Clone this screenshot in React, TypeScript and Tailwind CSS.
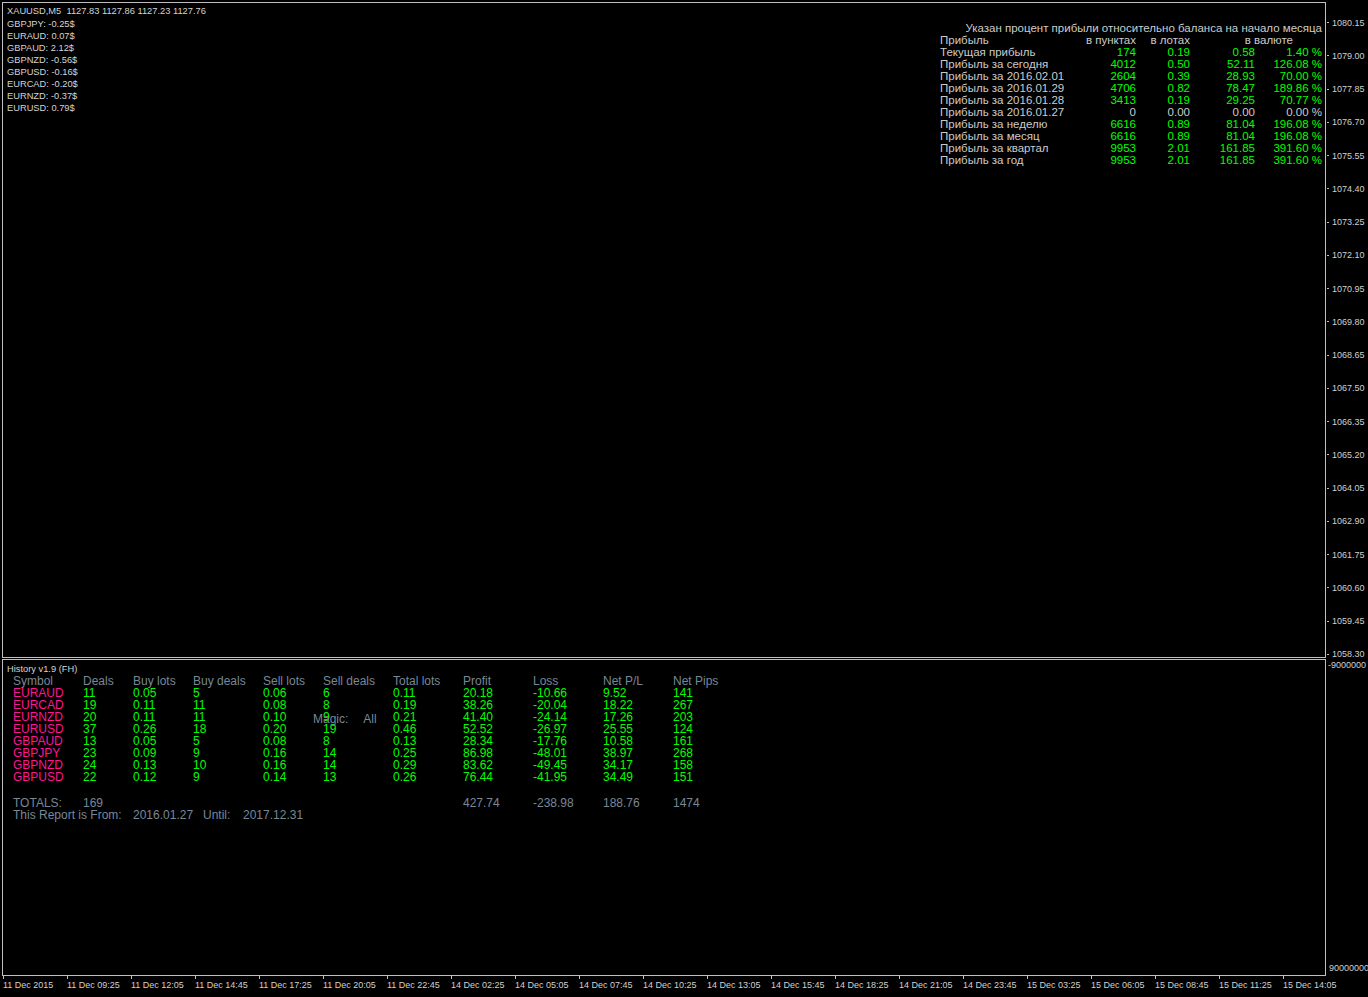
import React from "react";

const prices = [
  "1080.15","1079.00","1077.85","1076.70","1075.55","1074.40","1073.25","1072.10","1070.95","1069.80",
  "1068.65","1067.50","1066.35","1065.20","1064.05","1062.90","1061.75","1060.60","1059.45","1058.30",
];

const times = [
  "11 Dec 2015","11 Dec 09:25","11 Dec 12:05","11 Dec 14:45","11 Dec 17:25","11 Dec 20:05","11 Dec 22:45",
  "14 Dec 02:25","14 Dec 05:05","14 Dec 07:45","14 Dec 10:25","14 Dec 13:05","14 Dec 15:45","14 Dec 18:25",
  "14 Dec 21:05","14 Dec 23:45","15 Dec 03:25","15 Dec 06:05","15 Dec 08:45","15 Dec 11:25","15 Dec 14:05",
];

const pairs = [
  "GBPJPY: -0.25$","EURAUD: 0.07$","GBPAUD: 2.12$","GBPNZD: -0.56$",
  "GBPUSD: -0.16$","EURCAD: -0.20$","EURNZD: -0.37$","EURUSD: 0.79$",
];

const profitRows: [string, string, string, string, string, boolean][] = [
  ["Текущая прибыль","174","0.19","0.58","1.40 %",true],
  ["Прибыль за сегодня","4012","0.50","52.11","126.08 %",true],
  ["Прибыль за 2016.02.01","2604","0.39","28.93","70.00 %",true],
  ["Прибыль за 2016.01.29","4706","0.82","78.47","189.86 %",true],
  ["Прибыль за 2016.01.28","3413","0.19","29.25","70.77 %",true],
  ["Прибыль за 2016.01.27","0","0.00","0.00","0.00 %",false],
  ["Прибыль за неделю","6616","0.89","81.04","196.08 %",true],
  ["Прибыль за месяц","6616","0.89","81.04","196.08 %",true],
  ["Прибыль за квартал","9953","2.01","161.85","391.60 %",true],
  ["Прибыль за год","9953","2.01","161.85","391.60 %",true],
];

const headers = ["Symbol","Deals","Buy lots","Buy deals","Sell lots","Sell deals","Total lots","Profit","Loss","Net P/L","Net Pips"];

const hist = [
  ["EURAUD","11","0.05","5","0.06","6","0.11","20.18","-10.66","9.52","141"],
  ["EURCAD","19","0.11","11","0.08","8","0.19","38.26","-20.04","18.22","267"],
  ["EURNZD","20","0.11","11","0.10","9","0.21","41.40","-24.14","17.26","203"],
  ["EURUSD","37","0.26","18","0.20","19","0.46","52.52","-26.97","25.55","124"],
  ["GBPAUD","13","0.05","5","0.08","8","0.13","28.34","-17.76","10.58","161"],
  ["GBPJPY","23","0.09","9","0.16","14","0.25","86.98","-48.01","38.97","268"],
  ["GBPNZD","24","0.13","10","0.16","14","0.29","83.62","-49.45","34.17","158"],
  ["GBPUSD","22","0.12","9","0.14","13","0.26","76.44","-41.95","34.49","151"],
];

const gridCols = "grid grid-cols-[70px_50px_60px_70px_60px_70px_70px_70px_70px_70px_80px]";

export default function App() {
  return (
    <div
      className="w-[1368px] h-[997px] bg-black overflow-hidden relative text-[#d0d0d0]"
      style={{ fontFamily: '"Liberation Sans", Arial, sans-serif' }}
    >
      <div className="flex flex-row h-[976px]">
        {/* chart panels */}
        <div className="w-[1326px] pl-[2px] pt-[2px] flex flex-col shrink-0">
          {/* main chart */}
          <div className="h-[656px] border border-[#c0c0c0] flex flex-row justify-between items-start">
            <div className="pl-[4px] pt-[2px] text-[9.3px] leading-[12px] text-[#d4d4d4]">
              <div className="whitespace-pre">XAUUSD,M5  1127.83 1127.86 1127.23 1127.76</div>
              <div className="mt-[1px] flex flex-col">
                {pairs.map((p) => (
                  <div key={p} className="h-[12px]">{p}</div>
                ))}
              </div>
            </div>
            <div className="mt-[19px] mr-[3px] text-[11.5px] leading-[12px] text-[#cccccc] w-[382px]">
              <div className="text-right h-[12px] whitespace-nowrap">Указан процент прибыли относительно баланса на начало месяца</div>
              <div className="grid grid-cols-[141px_55px_54px_65px_67px] h-[12px] whitespace-nowrap">
                <div>Прибыль</div>
                <div className="text-right">в пунктах</div>
                <div className="text-right">в лотах</div>
                <div className="col-span-2 text-right pr-[29px]">в валюте</div>
              </div>
              {profitRows.map((r) => (
                <div key={r[0]} className="grid grid-cols-[141px_55px_54px_65px_67px] h-[12px] whitespace-nowrap">
                  <div>{r[0]}</div>
                  <div className={"text-right " + (r[5] ? "text-[#00ff00]" : "")}>{r[1]}</div>
                  <div className={"text-right " + (r[5] ? "text-[#00ff00]" : "")}>{r[2]}</div>
                  <div className={"text-right " + (r[5] ? "text-[#00ff00]" : "")}>{r[3]}</div>
                  <div className={"text-right " + (r[5] ? "text-[#00ff00]" : "")}>{r[4]}</div>
                </div>
              ))}
            </div>
          </div>
          {/* indicator panel */}
          <div className="mt-[1px] h-[317px] border border-[#c0c0c0] relative pt-[3px]">
            <div className="pl-[4px] h-[12px] text-[9.3px] leading-[12px] text-[#d4d4d4]">History v1.9 (FH)</div>
            <div className="pl-[10px] text-[12px] leading-[12px] whitespace-nowrap">
              <div className={gridCols + " h-[12px] text-[#778899]"}>
                {headers.map((h) => (
                  <div key={h}>{h}</div>
                ))}
              </div>
              {hist.map((r) => (
                <div key={r[0]} className={gridCols + " h-[12px] text-[#00ff00]"}>
                  {r.map((c, i) => (
                    <div key={i} className={i === 0 ? "text-[#ff1493]" : ""}>{c}</div>
                  ))}
                </div>
              ))}
              <div className={gridCols + " h-[12px] mt-[14px] text-[#778899]"}>
                <div>TOTALS:</div>
                <div>169</div>
                <div></div>
                <div></div>
                <div></div>
                <div></div>
                <div></div>
                <div>427.74</div>
                <div>-238.98</div>
                <div>188.76</div>
                <div>1474</div>
              </div>
              <div className="flex flex-row h-[12px] text-[#778899]">
                <div className="w-[120px]">This Report is From:</div>
                <div className="w-[70px]">2016.01.27</div>
                <div className="w-[40px]">Until:</div>
                <div>2017.12.31</div>
              </div>
            </div>
            <div className="absolute left-[310px] top-[53px] text-[12px] leading-[12px] text-[#778899] flex flex-row">
              <span>Magic:</span>
              <span className="ml-[15px]">All</span>
            </div>
          </div>
        </div>
        {/* right price axis */}
        <div className="flex-1 flex flex-col text-[9px] leading-[12px] text-[#d0d0d0] whitespace-nowrap pt-[16.5px]">
          <div className="flex flex-col gap-[21.25px]">
            {prices.map((p) => (
              <div key={p} className="h-[12px] flex flex-row items-center">
                <div className="w-[2px] h-px bg-[#c0c0c0] ml-[1px]" />
                <div className="ml-[3px]">{p}</div>
              </div>
            ))}
          </div>
          <div className="h-[12px] mt-[-1px] flex flex-row items-center">
            <div className="ml-[2px]">-9000000</div>
          </div>
          <div className="h-[12px] mt-[291px] flex flex-row items-center">
            <div className="ml-[3px]">90000000</div>
          </div>
        </div>
      </div>
      {/* bottom time axis */}
      <div className="flex flex-row pl-[3px] text-[9px] leading-[12px] text-[#d0d0d0] whitespace-nowrap">
        {times.map((t) => (
          <div key={t} className="w-[64px] shrink-0 flex flex-col">
            <div className="w-px h-[3px] bg-[#c0c0c0]" />
            <div>{t}</div>
          </div>
        ))}
      </div>
    </div>
  );
}
